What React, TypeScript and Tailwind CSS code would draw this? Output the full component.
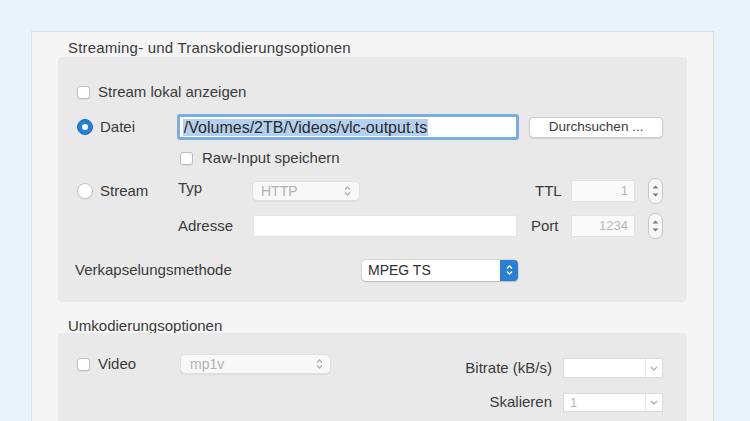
import React from "react";

function UpDown({ color = "#a0a0a0" }: { color?: string }) {
  return (
    <svg width="7" height="12" viewBox="0 0 7 12">
      <path d="M1 4.5 L3.5 2 L6 4.5" fill="none" stroke={color} strokeWidth="1.3" />
      <path d="M1 7.5 L3.5 10 L6 7.5" fill="none" stroke={color} strokeWidth="1.3" />
    </svg>
  );
}

function Checkbox() {
  return <span className="block w-[13px] h-[13px] shrink-0 rounded-[3px] border border-[#bcbcbc] bg-white shadow-[0_1px_1px_rgba(0,0,0,0.06)]" />;
}

function Radio({ on = false }: { on?: boolean }) {
  return on ? (
    <span className="flex w-[16px] h-[16px] shrink-0 items-center justify-center rounded-full border border-[#1b6bbd] bg-[#2380d8]">
      <span className="block w-[6px] h-[6px] rounded-full bg-white" />
    </span>
  ) : (
    <span className="block w-[16px] h-[16px] shrink-0 rounded-full border border-[#c2c2c2] bg-white shadow-[0_1px_1px_rgba(0,0,0,0.06)]" />
  );
}

function Stepper() {
  return (
    <div className="flex h-[26px] w-[15px] flex-col items-center justify-center gap-[4px] rounded-[7px] border border-[#c6c6c6] bg-[#f7f7f7]">
      <svg width="7" height="4" viewBox="0 0 7 4"><path d="M0.5 3.5 L3.5 0.5 L6.5 3.5 Z" fill="#7a7a7a" /></svg>
      <svg width="7" height="4" viewBox="0 0 7 4"><path d="M0.5 0.5 L3.5 3.5 L6.5 0.5 Z" fill="#7a7a7a" /></svg>
    </div>
  );
}

function Combo({ value = "", h = "h-[20px]" }: { value?: string; h?: string }) {
  return (
    <div className={`flex w-[100px] ${h} items-stretch border border-[#dadada] bg-white`}>
      <div className="flex-1 pl-[6px] text-[13px] leading-[18px] text-[#b5b5b5]">{value}</div>
      <div className="flex w-[17px] items-center justify-center border-l border-[#e6e6e6]">
        <svg width="8" height="5" viewBox="0 0 8 5"><path d="M1 1 L4 4 L7 1" fill="none" stroke="#a8a8a8" strokeWidth="1.2" /></svg>
      </div>
    </div>
  );
}

function RightCluster({ label, value, labelPad }: { label: string; value: string; labelPad: string }) {
  return (
    <div className="flex w-[132px] items-center">
      <div className={`w-[40px] ${labelPad}`}>{label}</div>
      <div className="flex h-[22px] w-[64px] items-center justify-end border border-[#e2e2e2] bg-[#fafafa] pr-[6px] text-[13px] text-[#b8b8b8]">{value}</div>
      <div className="ml-[13px]"><Stepper /></div>
    </div>
  );
}

export default function App() {
  return (
    <div className="h-[421px] w-[750px] overflow-hidden bg-[#e9f3fc] pl-[31px] pr-[36px] pt-[31px] font-['Liberation_Sans',Arial,sans-serif] text-[15px] text-[#3a3a3a]">
      <div className="flex h-[390px] flex-col border-l border-t border-r border-[#dedede] bg-[#f5f5f5]">
        <div className="h-[25px] shrink-0 pl-[36px] pt-[8px] leading-[15px] tracking-[0.2px]">Streaming- und Transkodierungsoptionen</div>

        <div className="mx-[26px] h-[245px] shrink-0 rounded-[4px] bg-[#e9e9e9] pl-[19px] pr-[24px] pt-[25px]">
          <div className="flex h-[20px] items-center">
            <Checkbox />
            <span className="ml-[8px]">Stream lokal anzeigen</span>
          </div>

          <div className="mt-[12px] flex h-[26px] items-center">
            <div className="flex w-[100px] items-center">
              <Radio on />
              <span className="ml-[7px]">Datei</span>
            </div>
            <div className="h-[26px] w-[343px] rounded-[3px] bg-[#78aee2] p-[3px]">
              <div className="flex h-full items-center bg-white pl-[3px]">
                <span className="bg-[#b4d0ee] px-[1px] text-[16px] leading-[17px] text-[#2a2a2a]">/Volumes/2TB/Videos/vlc-output.ts</span>
              </div>
            </div>
            <div className="ml-[10px] flex h-[21px] w-[134px] items-center justify-center rounded-[4px] border border-[#cbcbcb] bg-white text-[13.5px] shadow-[0_1px_1px_rgba(0,0,0,0.1)]">Durchsuchen ...</div>
          </div>

          <div className="mt-[8px] flex h-[20px] items-center">
            <div className="ml-[103px]"><Checkbox /></div>
            <span className="ml-[9px]">Raw-Input speichern</span>
          </div>

          <div className="mt-[10px] flex h-[26px] items-center">
            <div className="flex w-[101px] items-center">
              <Radio />
              <span className="ml-[7px]">Stream</span>
            </div>
            <div className="-mt-[6px] w-[74px]">Typ</div>
            <div className="flex h-[20px] w-[108px] items-center justify-between rounded-[5px] border border-[#e0e0e0] bg-[#f8f8f8] pl-[8px] pr-[8px] text-[14px] text-[#b2b2b2] shadow-[0_1px_1px_rgba(0,0,0,0.05)]">
              <span>HTTP</span>
              <UpDown color="#b0b0b0" />
            </div>
            <div className="flex-1" />
            <RightCluster label="TTL" value="1" labelPad="pl-[4px]" />
          </div>

          <div className="mt-[9px] flex h-[26px] items-center">
            <div className="w-[101px]" />
            <div className="w-[75px]">Adresse</div>
            <div className="h-[22px] w-[264px] border border-[#e4e4e4] bg-white" />
            <div className="flex-1" />
            <RightCluster label="Port" value="1234" labelPad="" />
          </div>

          <div className="mt-[21px] flex h-[20px] items-center">
            <div className="-ml-[2px] w-[287px]">Verkapselungsmethode</div>
            <div className="flex h-[21px] w-[156px] items-stretch rounded-[4px] bg-white shadow-[0_0_0_1px_rgba(0,0,0,0.08),0_1px_1px_rgba(0,0,0,0.12)]">
              <div className="flex flex-1 items-center pl-[6px] text-[14px] text-[#2e2e2e]">MPEG TS</div>
              <div className="flex w-[18px] items-center justify-center rounded-r-[4px] bg-[#2a7fd3]">
                <UpDown color="#ffffff" />
              </div>
            </div>
          </div>
        </div>

        <div className="h-[31px] shrink-0 pl-[36px] pt-[16px] leading-[15px]">Umkodierungsoptionen</div>

        <div className="mx-[26px] flex-1 rounded-t-[4px] bg-[#e9e9e9] pl-[19px] pr-[24px] pt-[21px]">
          <div className="flex h-[23px] items-start">
            <div className="flex h-[20px] w-[103px] items-center">
              <Checkbox />
              <span className="ml-[8px]">Video</span>
            </div>
            <div className="flex h-[20px] w-[151px] items-center justify-between rounded-[5px] border border-[#e0e0e0] bg-[#f8f8f8] pl-[9px] pr-[7px] text-[14px] text-[#b2b2b2] shadow-[0_1px_1px_rgba(0,0,0,0.05)]">
              <span>mp1v</span>
              <UpDown color="#b0b0b0" />
            </div>
            <div className="flex-1" />
            <div className="mt-[3px] flex items-center">
              <span className="mr-[11px]">Bitrate (kB/s)</span>
              <Combo />
            </div>
          </div>
          <div className="mt-[14px] flex items-center justify-end">
            <span className="mr-[11px]">Skalieren</span>
            <Combo value="1" h="h-[19px]" />
          </div>
        </div>
      </div>
    </div>
  );
}
